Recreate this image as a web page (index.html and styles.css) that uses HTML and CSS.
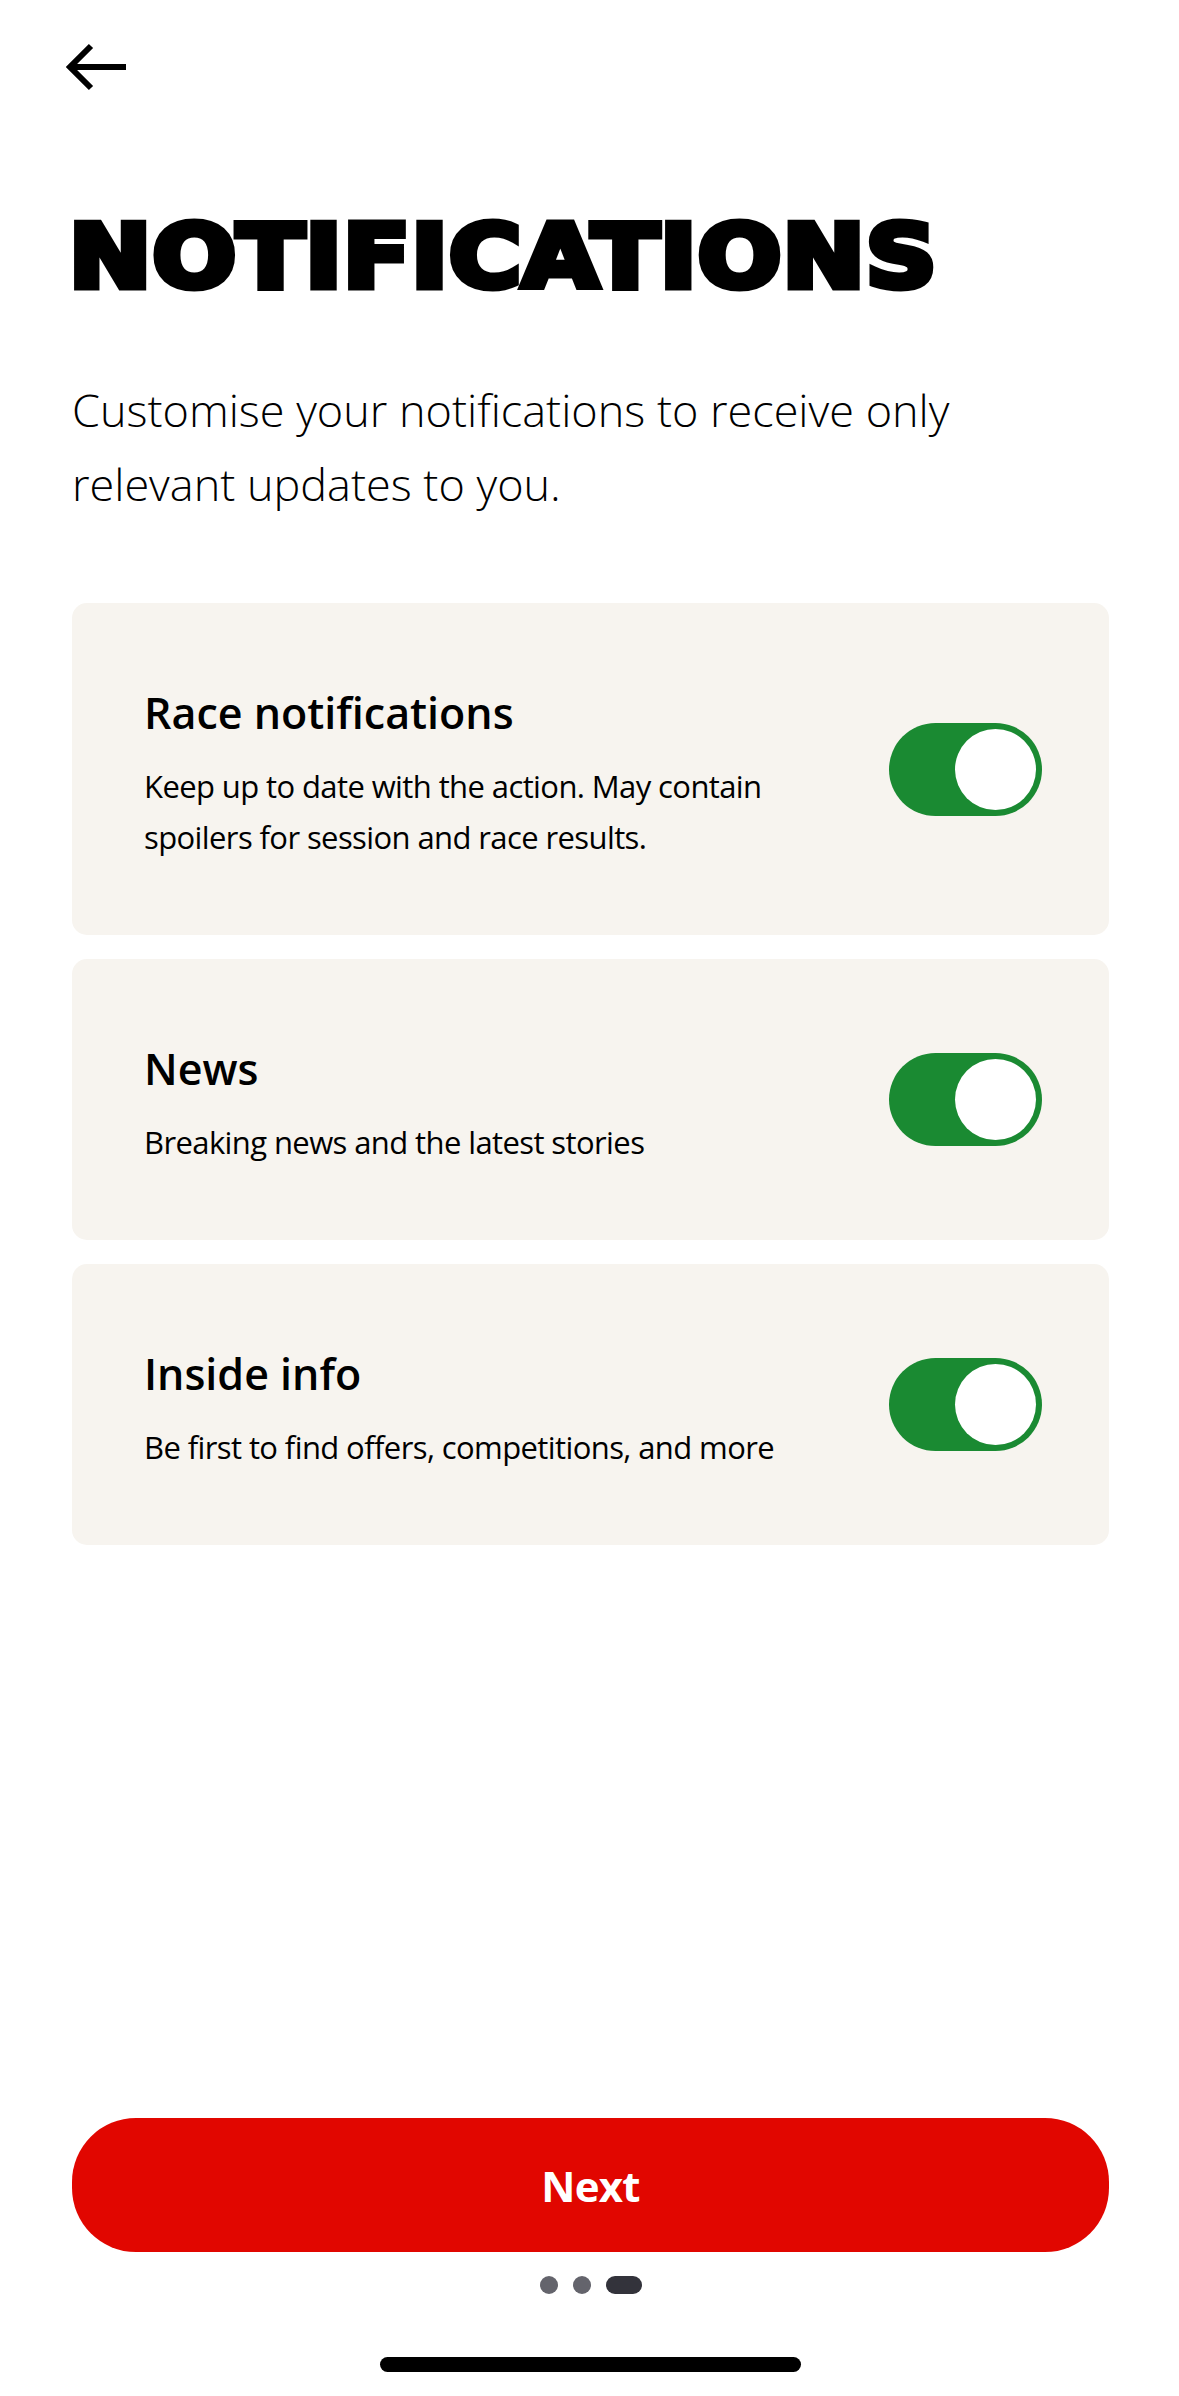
FILE: index.html
```html
<!DOCTYPE html>
<html lang="en">
<head>
<meta charset="utf-8">
<title>Notifications</title>
<link rel="stylesheet" href="styles.css">
</head>
<body>
<main class="screen">
  <header class="topbar">
    <button class="back" aria-label="Back">
      <svg viewBox="0 0 66 50" width="66" height="50"><path d="M25 3 L4 24 L25 45 M4 24 H60" fill="none" stroke="#000" stroke-width="6"/></svg>
    </button>
  </header>
  <h1 class="title">NOTIFICATIONS</h1>
  <p class="intro">Customise your notifications to receive only<br>relevant updates to you.</p>
  <section class="cards">
    <article class="card">
      <div class="card-text">
        <h2 class="card-title">Race notifications</h2>
        <p class="card-desc">Keep up to date with the action. May contain<br>spoilers for session and race results.</p>
      </div>
      <span class="toggle"><span class="knob"></span></span>
    </article>
    <article class="card">
      <div class="card-text">
        <h2 class="card-title">News</h2>
        <p class="card-desc">Breaking news and the latest stories</p>
      </div>
      <span class="toggle"><span class="knob"></span></span>
    </article>
    <article class="card">
      <div class="card-text">
        <h2 class="card-title">Inside info</h2>
        <p class="card-desc">Be first to find offers, competitions, and more</p>
      </div>
      <span class="toggle"><span class="knob"></span></span>
    </article>
  </section>
  <footer class="bottom">
    <button class="next">Next</button>
    <div class="dots"><span class="dot"></span><span class="dot"></span><span class="dot active"></span></div>
    <div class="home-bar"></div>
  </footer>
</main>
</body>
</html>
```
FILE: styles.css
```css
* { box-sizing: border-box; }
html, body { margin: 0; padding: 0; background: #fff; }
body { font-family: "Open Sans", "Noto Sans", sans-serif; color: #000; }
.screen { width: 1179px; height: 2396px; display: flex; flex-direction: column; padding: 0 70px 0 72px; }
.topbar { height: 112px; padding-top: 43px; margin-left: -6px; }
.back { display: block; padding: 0; border: 0; background: none; width: 66px; height: 50px; }
.back svg { display: block; }
.title { width: fit-content; margin: 85px 0 0 -3px; font-family: "DejaVu Sans", sans-serif; font-weight: 700; font-size: 87px; letter-spacing: 1px; line-height: 120px; height: 120px; white-space: nowrap; -webkit-text-stroke: 7px #000; transform: scaleX(1.13); transform-origin: left center; }
.intro { margin: 56px 0 0; font-size: 45px; line-height: 73.5px; font-weight: 350; }
.cards { display: flex; flex-direction: column; gap: 24px; margin-top: 83px; }
.card { display: flex; align-items: center; justify-content: space-between; background: #f7f4ef; border-radius: 15px; padding: 72px 67px 72px 72px; }
.card-title { margin: 0; font-size: 43px; line-height: 76px; font-weight: 600; }
.card-desc { margin: 10px 0 0; font-size: 31px; line-height: 51px; font-weight: 400; letter-spacing: -0.6px; }
.toggle { display: flex; justify-content: flex-end; flex: none; width: 153px; height: 93px; padding: 6px; border-radius: 47px; background: #1a8a32; }
.knob { display: block; width: 81px; height: 81px; border-radius: 50%; background: #fff; }
.bottom { margin-top: auto; display: flex; flex-direction: column; align-items: center; padding-bottom: 24px; }
.next { width: 100%; height: 134px; border: 0; border-radius: 64px; background: #e10600; color: #fff; font-family: inherit; font-size: 42px; font-weight: 700; letter-spacing: -0.8px; }
.dots { display: flex; gap: 15px; margin-top: 24px; }
.dot { width: 18px; height: 18px; border-radius: 9px; background: #64646c; }
.dot.active { width: 36px; background: #33333b; }
.home-bar { width: 421px; height: 15px; border-radius: 8px; background: #000; margin-top: 63px; }
```
